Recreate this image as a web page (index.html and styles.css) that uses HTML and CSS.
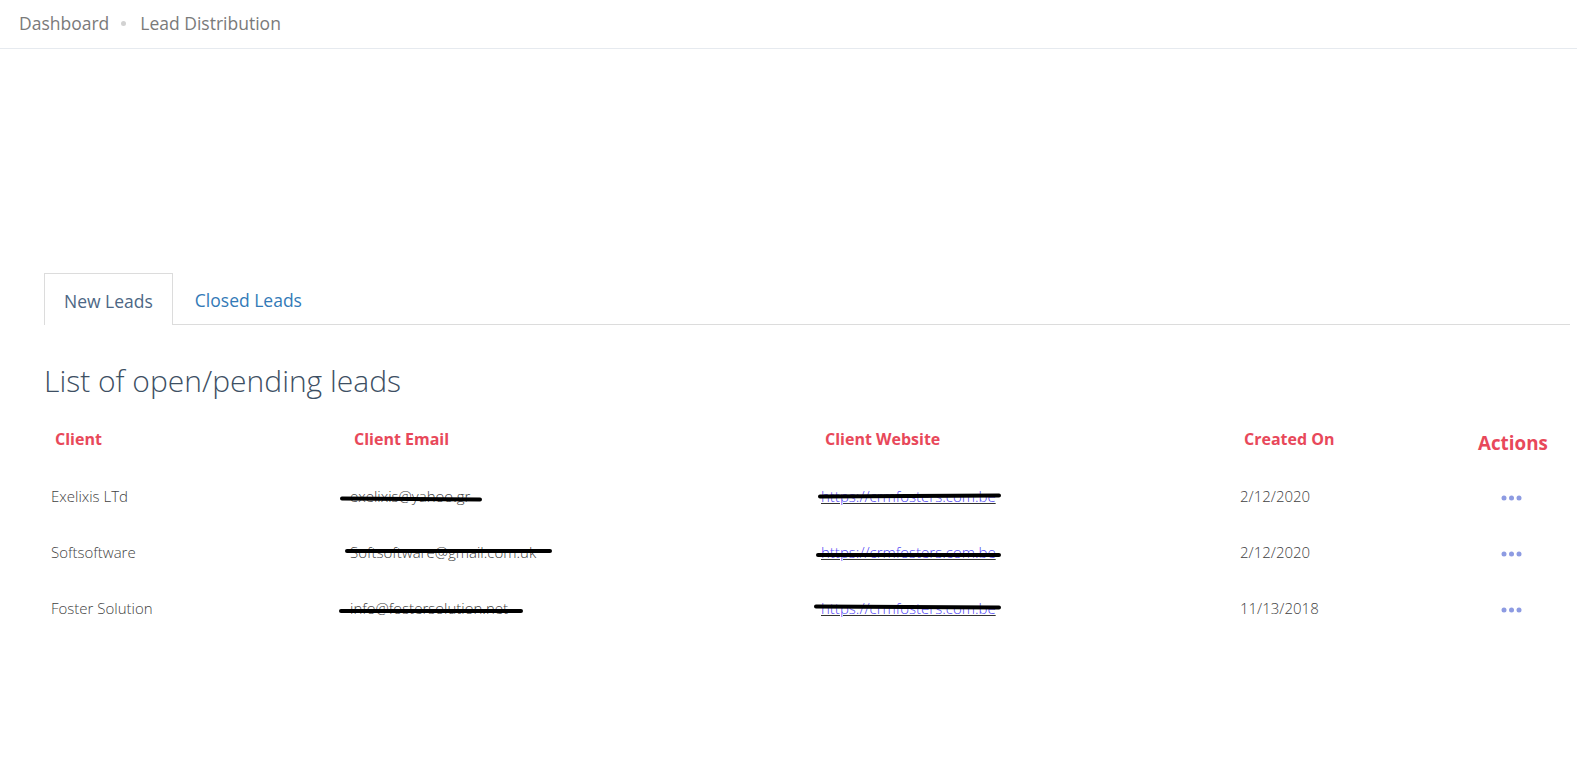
FILE: index.html
```html
<!DOCTYPE html>
<html>
<head>
<meta charset="utf-8">
<link rel="stylesheet" href="styles.css">
</head>
<body>
<header class="crumbs">
  <span class="crumb">Dashboard</span>
  <span class="crumb-dot"></span>
  <span class="crumb">Lead Distribution</span>
</header>
<main class="content">
  <nav class="tabs">
    <span class="tab active">New Leads</span>
    <span class="tab">Closed Leads</span>
  </nav>
  <h1 class="title">List of open/pending leads</h1>
  <div class="grid">
    <div class="th">Client</div>
    <div class="th">Client Email</div>
    <div class="th">Client Website</div>
    <div class="th">Created On</div>
    <div class="th th-actions">Actions</div>

    <div class="td">Exelixis LTd</div>
    <div class="td"><span class="struck s1">exelixis@yahoo.gr</span></div>
    <div class="td"><a class="link struck s4" href="#">https://crmfosters.com.be</a></div>
    <div class="td">2/12/2020</div>
    <div class="td td-actions"><svg width="21" height="6" viewBox="0 0 21 6"><circle cx="3" cy="3" r="2.5"/><circle cx="10.5" cy="3" r="2.5"/><circle cx="18" cy="3" r="2.5"/></svg></div>

    <div class="td">Softsoftware</div>
    <div class="td"><span class="struck s2">Softsoftware@gmail.com.uk</span></div>
    <div class="td"><a class="link struck s5" href="#">https://crmfosters.com.be</a></div>
    <div class="td">2/12/2020</div>
    <div class="td td-actions"><svg width="21" height="6" viewBox="0 0 21 6"><circle cx="3" cy="3" r="2.5"/><circle cx="10.5" cy="3" r="2.5"/><circle cx="18" cy="3" r="2.5"/></svg></div>

    <div class="td">Foster Solution</div>
    <div class="td"><span class="struck s3">info@fostersolution.net</span></div>
    <div class="td"><a class="link struck s6" href="#">https://crmfosters.com.be</a></div>
    <div class="td">11/13/2018</div>
    <div class="td td-actions"><svg width="21" height="6" viewBox="0 0 21 6"><circle cx="3" cy="3" r="2.5"/><circle cx="10.5" cy="3" r="2.5"/><circle cx="18" cy="3" r="2.5"/></svg></div>
  </div>
</main>
</body>
</html>
```

FILE: styles.css
```css
html, body {
  margin: 0;
  padding: 0;
  background: #fff;
}
body {
  font-family: "Open Sans", "Noto Sans", sans-serif;
}
.crumbs {
  display: flex;
  align-items: center;
  padding: 0 0 2px 19px;
  height: 46px;
  border-bottom: 1px solid #e6eaef;
  font-size: 17.5px;
  color: #7a7a7a;
}
.crumb-dot {
  width: 5px;
  height: 5px;
  border-radius: 50%;
  background: #d2d2d2;
  margin: 0 14px 0 12px;
}
.content {
  padding: 224px 7px 0 44px;
}
.tabs {
  display: flex;
  border-bottom: 1px solid #dcdcdc;
  height: 51px;
}
.tab {
  display: flex;
  align-items: center;
  padding: 2px 19px 0 19px;
  margin-right: 2px;
  font-size: 17.5px;
  color: #337ab7;
  border: 1px solid transparent;
  border-bottom: none;
}
.tab.active {
  color: #4d6785;
  border-color: #dcdcdc;
  background: #fff;
  margin-bottom: -1px;
}
.title {
  margin: 36px 0 0 0;
  font-size: 30px;
  font-weight: 300;
  color: #3d4f63;
  line-height: 40px;
}
.grid {
  display: grid;
  grid-template-columns: 299px 471px 419px 234px 1fr;
  grid-auto-rows: 56px;
  margin-top: 11px;
}
.th {
  padding-left: 11px;
  font-size: 16px;
  font-weight: 700;
  color: #e8485a;
  display: flex;
  align-items: center;
  height: 54px;
}
.th-actions {
  font-size: 18.8px;
  padding-top: 4px;
}
.td {
  padding-left: 7px;
  font-size: 15px;
  font-weight: 300;
  color: #3f3f3f;
  display: flex;
  align-items: center;
}
.td-actions {
  padding-left: 34px;
  padding-top: 3px;
}
.td-actions svg {
  fill: #8d9be2;
}
.link {
  color: #5046f5;
  text-decoration: underline;
  text-decoration-color: #333;
}
.struck {
  position: relative;
}
.struck::after {
  content: "";
  position: absolute;
  height: 4px;
  border-radius: 2px;
  background: #000;
  top: 50%;
}
.s1::after { left: -10px; right: -12px; margin-top: 1px; transform: rotate(0.4deg); }
.s2::after { left: -5px; right: -16px; margin-top: -3px; }
.s3::after { left: -11px; right: -15px; margin-top: 1px; }
.s4::after { left: -3px; right: -5px; margin-top: -2px; transform: rotate(-0.3deg); }
.s5::after { left: -5px; right: -5px; margin-top: 1px; }
.s6::after { left: -7px; right: -5px; margin-top: -3px; transform: rotate(0.3deg); }
```
